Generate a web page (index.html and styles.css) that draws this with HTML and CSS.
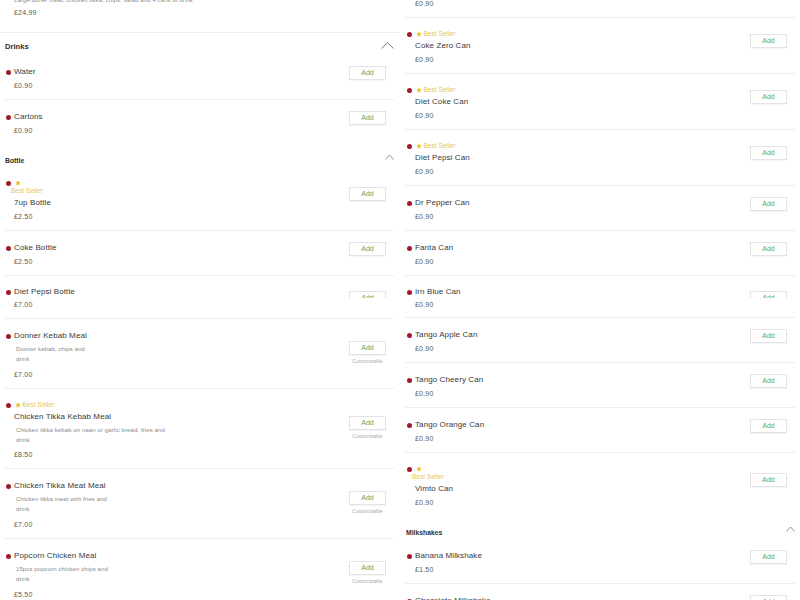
FILE: index.html
```html
<!DOCTYPE html>
<html lang="en">
<head>
<meta charset="utf-8">
<title>Menu</title>
<link rel="stylesheet" href="styles.css">
</head>
<body>
<div class="page">
  <div class="col">
    <div class="item partial">
      <div class="info">
        <div class="desc top-desc">Large doner meat, chicken tikka, chips, salad and 4 cans of drink</div>
        <div class="price">£24.99</div>
      </div>
    </div>

    <div class="head big"><span class="head-title">Drinks</span>
      <svg class="chev-big" width="13" height="7" viewBox="0 0 13 7"><polyline points="0.5,6.5 6.5,0.8 12.5,6.5" fill="none" stroke="#777" stroke-width="1"/></svg>
    </div>

    <div class="item plain">
      <div class="info">
        <div class="line"><span class="dot"></span><span class="name">Water</span></div>
        <div class="price">£0.90</div>
      </div>
      <div class="action"><button class="add">Add</button></div>
    </div>
    <div class="item plain last">
      <div class="info">
        <div class="line"><span class="dot"></span><span class="name">Cartons</span></div>
        <div class="price">£0.90</div>
      </div>
      <div class="action"><button class="add">Add</button></div>
    </div>

    <div class="head"><span class="head-title">Bottle</span>
      <svg class="chev" width="9" height="6" viewBox="0 0 9 6"><polyline points="0.5,5.5 4.5,1 8.5,5.5" fill="none" stroke="#888" stroke-width="0.9"/></svg>
    </div>

    <div class="item stacked">
      <div class="info">
        <div class="badge-line"><span class="dot"></span><svg class="star" width="6" height="6" viewBox="0 0 10 10"><polygon points="5,0.3 6.4,3.4 9.8,3.7 7.2,6 8,9.5 5,7.7 2,9.5 2.8,6 0.2,3.7 3.6,3.4" fill="#efbd2c"/></svg></div>
        <div class="bs-text stacked-bs">Best Seller</div>
        <div class="name indent">7up Bottle</div>
        <div class="price">£2.50</div>
      </div>
      <div class="action"><button class="add">Add</button></div>
    </div>
    <div class="item plain">
      <div class="info">
        <div class="line"><span class="dot"></span><span class="name">Coke Bottle</span></div>
        <div class="price">£2.50</div>
      </div>
      <div class="action"><button class="add">Add</button></div>
    </div>
    <div class="item short">
      <div class="info">
        <div class="line"><span class="dot"></span><span class="name">Diet Pepsi Bottle</span></div>
        <div class="price">£7.00</div>
      </div>
      <div class="action"><div class="clip"><button class="add">Add</button></div></div>
    </div>
    <div class="item meal">
      <div class="info">
        <div class="line"><span class="dot"></span><span class="name">Donner Kebab Meal</span></div>
        <div class="desc">Donner kebab, chips and<br>drink</div>
        <div class="price">£7.00</div>
      </div>
      <div class="action"><button class="add">Add</button><div class="custom">Customizable</div></div>
    </div>
    <div class="item bsmeal">
      <div class="info">
        <div class="badge-line"><span class="dot"></span><svg class="star" width="6" height="6" viewBox="0 0 10 10"><polygon points="5,0.3 6.4,3.4 9.8,3.7 7.2,6 8,9.5 5,7.7 2,9.5 2.8,6 0.2,3.7 3.6,3.4" fill="#efbd2c"/></svg><span class="bs-text">Best Seller</span></div>
        <div class="name indent">Chicken Tikka Kebab Meal</div>
        <div class="desc">Chicken tikka kebab on naan or garlic bread, fries and<br>drink</div>
        <div class="price">£8.50</div>
      </div>
      <div class="action"><button class="add">Add</button><div class="custom">Customizable</div></div>
    </div>
    <div class="item meal">
      <div class="info">
        <div class="line"><span class="dot"></span><span class="name">Chicken Tikka Meat Meal</span></div>
        <div class="desc">Chicken tikka meat with fries and<br>drink</div>
        <div class="price">£7.00</div>
      </div>
      <div class="action"><button class="add">Add</button><div class="custom">Customizable</div></div>
    </div>
    <div class="item meal">
      <div class="info">
        <div class="line"><span class="dot"></span><span class="name">Popcorn Chicken Meal</span></div>
        <div class="desc">15pcs popcorn chicken chips and<br>drink</div>
        <div class="price">£5.50</div>
      </div>
      <div class="action"><button class="add">Add</button><div class="custom">Customizable</div></div>
    </div>
  </div>

  <div class="col">
    <div class="item plain first-right">
      <div class="info">
        <div class="line"><span class="dot"></span><span class="name">Coke Can</span></div>
        <div class="price">£0.90</div>
      </div>
      <div class="action"><button class="add">Add</button></div>
    </div>
    <div class="item bs">
      <div class="info">
        <div class="badge-line"><span class="dot"></span><svg class="star" width="6" height="6" viewBox="0 0 10 10"><polygon points="5,0.3 6.4,3.4 9.8,3.7 7.2,6 8,9.5 5,7.7 2,9.5 2.8,6 0.2,3.7 3.6,3.4" fill="#efbd2c"/></svg><span class="bs-text">Best Seller</span></div>
        <div class="name indent">Coke Zero Can</div>
        <div class="price">£0.90</div>
      </div>
      <div class="action"><button class="add">Add</button></div>
    </div>
    <div class="item bs">
      <div class="info">
        <div class="badge-line"><span class="dot"></span><svg class="star" width="6" height="6" viewBox="0 0 10 10"><polygon points="5,0.3 6.4,3.4 9.8,3.7 7.2,6 8,9.5 5,7.7 2,9.5 2.8,6 0.2,3.7 3.6,3.4" fill="#efbd2c"/></svg><span class="bs-text">Best Seller</span></div>
        <div class="name indent">Diet Coke Can</div>
        <div class="price">£0.90</div>
      </div>
      <div class="action"><button class="add">Add</button></div>
    </div>
    <div class="item bs">
      <div class="info">
        <div class="badge-line"><span class="dot"></span><svg class="star" width="6" height="6" viewBox="0 0 10 10"><polygon points="5,0.3 6.4,3.4 9.8,3.7 7.2,6 8,9.5 5,7.7 2,9.5 2.8,6 0.2,3.7 3.6,3.4" fill="#efbd2c"/></svg><span class="bs-text">Best Seller</span></div>
        <div class="name indent">Diet Pepsi Can</div>
        <div class="price">£0.90</div>
      </div>
      <div class="action"><button class="add">Add</button></div>
    </div>
    <div class="item plain">
      <div class="info">
        <div class="line"><span class="dot"></span><span class="name">Dr Pepper Can</span></div>
        <div class="price">£0.90</div>
      </div>
      <div class="action"><button class="add">Add</button></div>
    </div>
    <div class="item plain">
      <div class="info">
        <div class="line"><span class="dot"></span><span class="name">Fanta Can</span></div>
        <div class="price">£0.90</div>
      </div>
      <div class="action"><button class="add">Add</button></div>
    </div>
    <div class="item short irn">
      <div class="info">
        <div class="line"><span class="dot"></span><span class="name">Irn Blue Can</span></div>
        <div class="price">£0.90</div>
      </div>
      <div class="action"><div class="clip"><button class="add">Add</button></div></div>
    </div>
    <div class="item plain">
      <div class="info">
        <div class="line"><span class="dot"></span><span class="name">Tango Apple Can</span></div>
        <div class="price">£0.90</div>
      </div>
      <div class="action"><button class="add">Add</button></div>
    </div>
    <div class="item plain">
      <div class="info">
        <div class="line"><span class="dot"></span><span class="name">Tango Cheery Can</span></div>
        <div class="price">£0.90</div>
      </div>
      <div class="action"><button class="add">Add</button></div>
    </div>
    <div class="item plain">
      <div class="info">
        <div class="line"><span class="dot"></span><span class="name">Tango Orange Can</span></div>
        <div class="price">£0.90</div>
      </div>
      <div class="action"><button class="add">Add</button></div>
    </div>
    <div class="item stacked last">
      <div class="info">
        <div class="badge-line"><span class="dot"></span><svg class="star" width="6" height="6" viewBox="0 0 10 10"><polygon points="5,0.3 6.4,3.4 9.8,3.7 7.2,6 8,9.5 5,7.7 2,9.5 2.8,6 0.2,3.7 3.6,3.4" fill="#efbd2c"/></svg></div>
        <div class="bs-text stacked-bs">Best Seller</div>
        <div class="name indent">Vimto Can</div>
        <div class="price">£0.90</div>
      </div>
      <div class="action"><button class="add">Add</button></div>
    </div>

    <div class="head"><span class="head-title">Milkshakes</span>
      <svg class="chev" width="9" height="6" viewBox="0 0 9 6"><polyline points="0.5,5.5 4.5,1 8.5,5.5" fill="none" stroke="#888" stroke-width="0.9"/></svg>
    </div>

    <div class="item plain">
      <div class="info">
        <div class="line"><span class="dot"></span><span class="name">Banana Milkshake</span></div>
        <div class="price">£1.50</div>
      </div>
      <div class="action"><button class="add">Add</button></div>
    </div>
    <div class="item plain">
      <div class="info">
        <div class="line"><span class="dot"></span><span class="name">Chocolate Milkshake</span></div>
        <div class="price">£1.50</div>
      </div>
      <div class="action"><button class="add">Add</button></div>
    </div>
  </div>
</div>
</body>
</html>
```

FILE: styles.css
```css
html, body {
  margin: 0;
  padding: 0;
  background: #ffffff;
  height: 600px;
  overflow: hidden;
}

body {
  font-family: "Liberation Sans", Arial, sans-serif;
  color: #3a3a3a;
}

.page {
  display: grid;
  grid-template-columns: 390px 390px;
  column-gap: 11px;
  padding-left: 4px;
  align-items: start;
}

.col {
  display: flex;
  flex-direction: column;
}

/* section headers */
.head {
  display: flex;
  justify-content: space-between;
  align-items: flex-start;
  height: 22px;
  box-sizing: border-box;
  padding-left: 1px;
  padding-top: 10px;
}

.head-title {
  font-size: 6.8px;
  line-height: 10px;
  font-weight: bold;
  color: #2e2e2e;
  margin-top: 1px;
}

.head.big {
  padding-top: 8px;
}

.head.big .head-title {
  font-size: 7.6px;
}

.chev-big {
  margin-top: 1px;
  display: block;
}

.chev {
  margin-top: -1px;
  display: block;
}

/* items */
.item {
  display: flex;
  justify-content: space-between;
  align-items: flex-start;
  box-sizing: border-box;
  border-bottom: 1px solid #ededed;
  overflow: hidden;
}

.item.last {
  border-bottom-color: transparent;
}

.info {
  display: flex;
  flex-direction: column;
  padding-top: 1px;
}

.line,
.badge-line {
  display: flex;
  align-items: center;
}

.line {
  height: 12px;
}

.badge-line {
  height: 8px;
}

.dot {
  width: 5px;
  height: 5px;
  border-radius: 50%;
  background: #a01b29;
  margin-left: 1.5px;
  margin-right: 3.5px;
  flex: none;
}

.star {
  display: block;
  margin-left: 0.5px;
  margin-right: 2px;
  flex: none;
}

.bs-text {
  font-size: 6.4px;
  line-height: 8px;
  color: #e5c552;
  letter-spacing: 0.1px;
}

.stacked-bs {
  padding-left: 7px;
}

.name {
  font-size: 8px;
  line-height: 12px;
  color: #3a3a3a;
  letter-spacing: 0.1px;
  white-space: nowrap;
}

.name.indent {
  padding-left: 10px;
  margin-top: 2px;
}

.price {
  font-size: 7px;
  line-height: 10px;
  color: #5a5a5a;
  padding-left: 10px;
  margin-top: 3px;
  letter-spacing: 0.2px;
}

.desc {
  font-size: 6px;
  line-height: 10px;
  color: #8a8a8a;
  padding-left: 12px;
  margin-top: 2px;
  letter-spacing: 0.1px;
}

.action {
  display: flex;
  flex-direction: column;
  align-items: center;
  width: 37px;
  margin-right: 8px;
  flex: none;
}

.add {
  width: 37px;
  height: 14px;
  box-sizing: border-box;
  border: 1px solid #e3e3e3;
  background: #ffffff;
  color: #5ea858;
  font-family: "Liberation Sans", Arial, sans-serif;
  font-size: 7px;
  line-height: 12px;
  padding: 0;
  box-shadow: 0 1px 1px rgba(0, 0, 0, 0.04);
}

.custom {
  font-size: 5px;
  line-height: 6px;
  color: #aaaaaa;
  margin-top: 3px;
  white-space: nowrap;
}

.clip {
  height: 12px;
  overflow: hidden;
}

/* row variants */
.item.plain {
  height: 45px;
  padding-top: 10px;
}

.item.plain .action {
  margin-top: 1px;
}

.item.bs {
  height: 56px;
  padding-top: 11px;
}

.item.bs .action {
  margin-top: 5px;
}

.item.stacked {
  height: 64px;
  padding-top: 11px;
}

.item.stacked .action {
  margin-top: 9px;
}

.item.meal {
  height: 70px;
  padding-top: 10px;
}

.item.meal .price {
  margin-top: 6px;
}

.item.meal .action {
  margin-top: 12px;
}

.item.bsmeal {
  height: 80px;
  padding-top: 11px;
}

.item.bsmeal .price {
  margin-top: 5px;
}

.item.bsmeal .action {
  margin-top: 16px;
}

.item.short {
  height: 43px;
  padding-top: 9px;
}

.item.short .price {
  margin-top: 2px;
}

.item.short .action {
  margin-top: 1px;
}

.item.irn {
  height: 42px;
}

/* partial rows cut by the top of the viewport */
.item.partial {
  height: 39px;
  margin-top: -6px;
  margin-left: -4px;
  margin-right: -6px;
  padding-left: 4px;
  padding-top: 0;
}

.item.partial .info {
  padding-top: 0;
}

.top-desc {
  margin-top: 1px;
  padding-left: 10px;
  white-space: nowrap;
}

.item.partial .price {
  margin-top: 3px;
}

.item.first-right {
  margin-top: -27px;
}
```
